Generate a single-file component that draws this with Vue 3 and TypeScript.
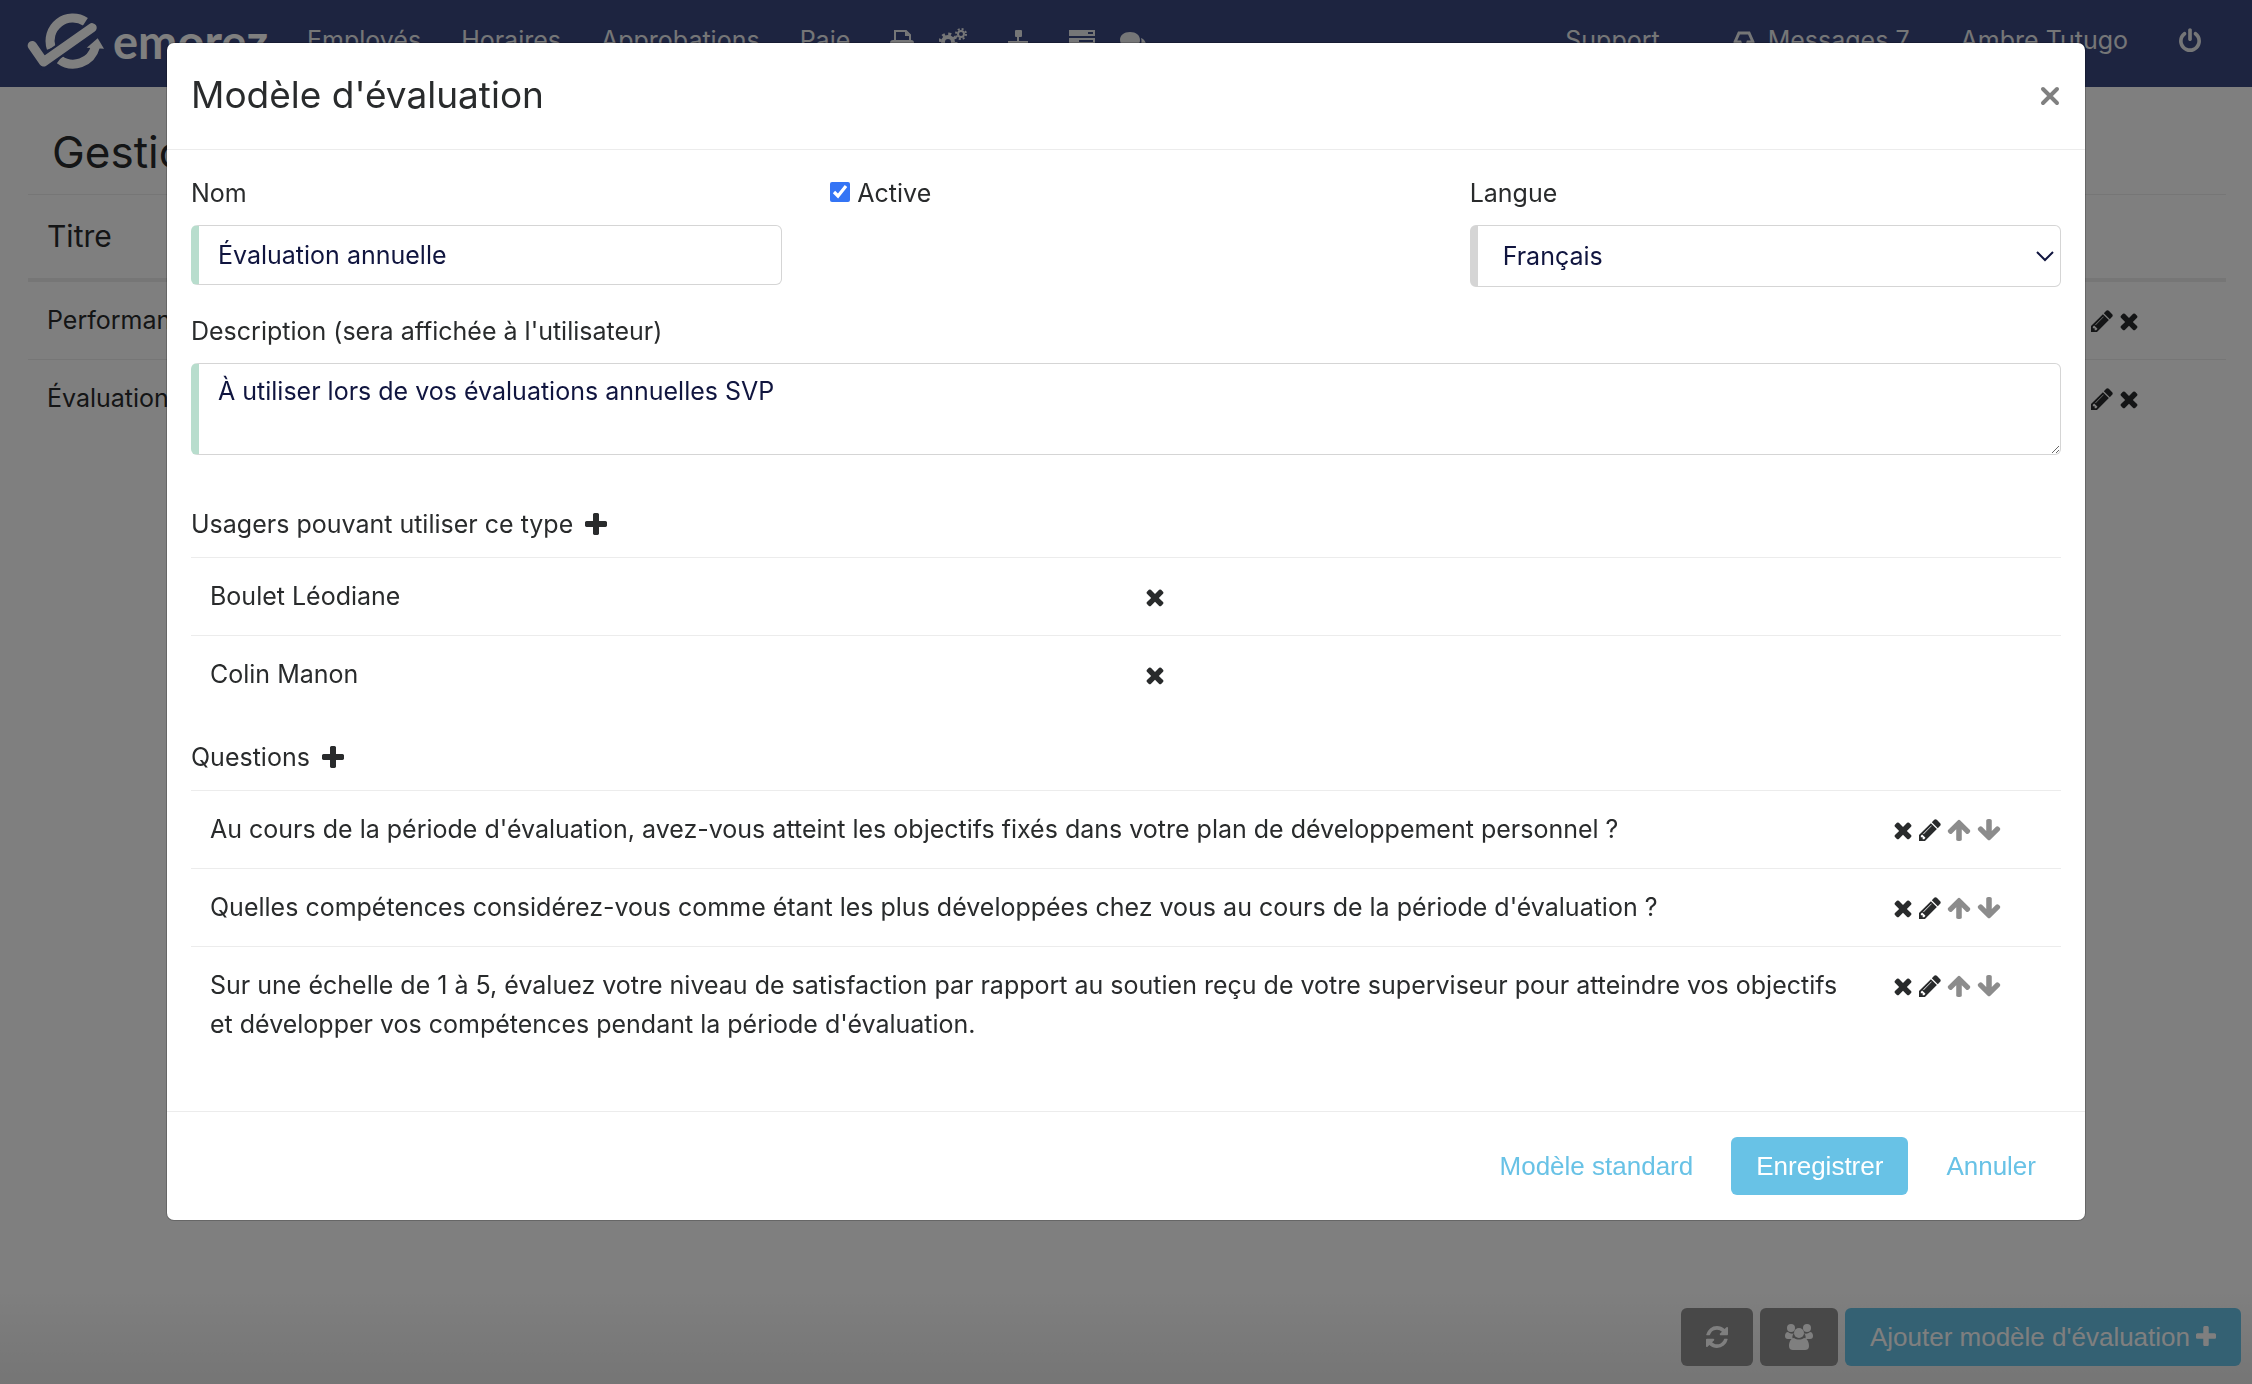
<script setup lang="ts">
import { ref } from 'vue'

interface Icon {
  box: string
  width: number
  path: string
}

const icons: Record<string, Icon> = {
  times: {
    box: '192 0 1408 1792',
    width: 20,
    path: 'M1490 1322q0 40-28 68l-136 136q-28 28-68 28t-68-28l-294-294-294 294q-28 28-68 28t-68-28l-136-136q-28-28-28-68t28-68l294-294-294-294q-28-28-28-68t28-68l136-136q28-28 68-28t68 28l294 294 294-294q28-28 68-28t68 28l136 136q28 28 28 68t-28 68l-294 294 294 294q28 28 28 68z',
  },
  plus: {
    box: '192 0 1408 1792',
    width: 20,
    path: 'M1600 736v192q0 40-28 68t-68 28h-416v416q0 40-28 68t-68 28h-192q-40 0-68-28t-28-68v-416h-416q-40 0-68-28t-28-68v-192q0-40 28-68t68-28h416v-416q0-40 28-68t68-28h192q40 0 68 28t28 68v416h416q40 0 68 28t28 68z',
  },
  pencil: {
    box: '128 0 1536 1792',
    width: 22,
    path: 'M491 1536l91-91-235-235-91 91v107h128v128h107zm523-928q0-22-22-22-10 0-17 7l-542 542q-7 7-7 17 0 22 22 22 10 0 17-7l542-542q7-7 7-17zm-54-192l416 416-832 832h-416v-416zm683 96q0 53-37 90l-166 166-416-416 166-165q36-38 90-38 53 0 91 38l235 234q37 39 37 91z',
  },
  up: {
    box: '64 0 1664 1792',
    width: 24,
    path: 'M1675 971q0 51-37 90l-75 75q-38 38-91 38-54 0-90-38l-294-293v704q0 52-37.5 84.5t-90.5 32.5h-128q-53 0-90.5-32.5t-37.5-84.5v-704l-294 293q-36 38-90 38t-90-38l-75-75q-38-38-38-90 0-53 38-91l651-651q35-37 90-37 54 0 91 37l651 651q37 39 37 91z',
  },
  down: {
    box: '64 0 1664 1792',
    width: 24,
    path: 'M1675 832q0 53-37 90l-651 652q-39 37-91 37-53 0-90-37l-651-652q-38-36-38-90 0-53 38-91l74-75q39-37 91-37 53 0 90 37l294 294v-704q0-52 38-90t90-38h128q52 0 90 38t38 90v704l294-294q37-37 90-37 52 0 91 37l75 75q37 39 37 91z',
  },
  power: {
    box: '128 0 1536 1792',
    width: 22,
    path: 'M1664 896q0 156-61 298t-164 245-245 164-298 61-298-61-245-164-164-245-61-298q0-182 80.5-343t226.5-270q43-32 95.5-25t83.5 50q32 42 24.5 94.5t-49.5 84.5q-98 74-151.5 181t-53.5 228q0 104 40.5 198.5t109.5 163.5 163.5 109.5 198.5 40.5 198.5-40.5 163.5-109.5 109.5-163.5 40.5-198.5q0-121-53.5-228t-151.5-181q-42-32-49.5-84.5t24.5-94.5q31-43 84-50t95 25q146 109 226.5 270t80.5 343zm-640-768v640q0 52-38 90t-90 38-90-38-38-90v-640q0-52 38-90t90-38 90 38 38 90z',
  },
  refresh: {
    box: '128 0 1536 1792',
    width: 22,
    path: 'M1639 1056q0 5-1 7-64 268-268 434.5t-478 166.5q-146 0-282.5-55t-243.5-157l-129 129q-19 19-45 19t-45-19-19-45v-448q0-26 19-45t45-19h448q26 0 45 19t19 45-19 45l-137 137q71 66 161 102t187 36q134 0 250-65t186-179q11-17 53-117 8-23 30-23h192q13 0 22.5 9.5t9.5 22.5zm25-800v448q0 26-19 45t-45 19h-448q-26 0-45-19t-19-45 19-45l138-138q-148-137-349-137-134 0-250 65t-186 179q-11 17-53 117-8 23-30 23h-199q-13 0-22.5-9.5t-9.5-22.5v-7q65-268 270-434.5t480-166.5q146 0 284 55.5t245 156.5l130-129q19-19 45-19t45 19 19 45z',
  },
}

const name = ref('Évaluation annuelle')
const active = ref(true)
const language = ref('fr')
const description = ref('À utiliser lors de vos évaluations annuelles SVP')

const templates = ['Performance', 'Évaluation annuelle']
const users = ['Boulet Léodiane', 'Colin Manon']
const questions = [
  "Au cours de la période d'évaluation, avez-vous atteint les objectifs fixés dans votre plan de développement personnel ?",
  "Quelles compétences considérez-vous comme étant les plus développées chez vous au cours de la période d'évaluation ?",
  "Sur une échelle de 1 à 5, évaluez votre niveau de satisfaction par rapport au soutien reçu de votre superviseur pour atteindre vos objectifs et développer vos compétences pendant la période d'évaluation.",
]
const templateActions = [
  { icon: 'pencil', label: 'Modifier' },
  { icon: 'times', label: 'Supprimer' },
]
const questionActions = [
  { icon: 'times', label: 'Supprimer' },
  { icon: 'pencil', label: 'Modifier' },
  { icon: 'up', label: 'Monter' },
  { icon: 'down', label: 'Descendre' },
]
</script>

<template>
  <div class="page">
    <header class="topbar">
      <a href="#" class="brand">
        <svg class="mark" viewBox="20 30 235 180" width="78" height="60" fill="none" aria-hidden="true">
          <path d="M93 142A69 69 0 0 1 196 62" stroke="#fff" stroke-width="27" />
          <path d="M118 176A69 69 0 0 0 226 138" stroke="#fff" stroke-width="27" />
          <path d="M200 140L233 112L252 143Z" fill="#fff" />
          <path d="M36 134L70 183L216 80" stroke="#3a4880" stroke-width="42" />
          <path d="M36 134L70 183L216 80" stroke="#fff" stroke-width="28" stroke-linecap="round" stroke-linejoin="round" />
        </svg>
        <span>emorez</span>
      </a>
      <nav class="menu">
        <a href="#">Employés</a>
        <a href="#">Horaires</a>
        <a href="#">Approbations</a>
        <a href="#">Paie</a>
        <span class="pair">
          <a href="#" aria-label="Imprimer">
            <svg width="24" height="26" viewBox="0 0 24 26" aria-hidden="true">
              <path d="M5 13V3h11l4 4v6" fill="none" stroke="currentColor" stroke-width="2" />
              <path d="M15 3v5h5z" fill="currentColor" />
              <path d="M3 12h18a3 3 0 0 1 3 3v6h-4v-4H4v4H0v-6a3 3 0 0 1 3-3z" fill="currentColor" />
              <path d="M5 18v6h14v-6" fill="none" stroke="currentColor" stroke-width="2" />
            </svg>
          </a>
          <a href="#" aria-label="Paramètres">
            <svg width="28" height="26" viewBox="0 0 28 26" fill="none" stroke="currentColor" aria-hidden="true">
              <circle cx="9" cy="14" r="5" stroke-width="4" />
              <circle cx="9" cy="14" r="8" stroke-width="3" stroke-dasharray="3 3.28" />
              <circle cx="22" cy="6" r="3" stroke-width="2" />
              <circle cx="22" cy="6" r="5" stroke-width="2" stroke-dasharray="2 1.93" />
              <circle cx="22" cy="21" r="3" stroke-width="2" />
              <circle cx="22" cy="21" r="5" stroke-width="2" stroke-dasharray="2 1.93" />
            </svg>
          </a>
        </span>
        <a href="#" aria-label="Organigramme">
          <svg width="22" height="26" viewBox="0 0 22 26" fill="currentColor" aria-hidden="true">
            <rect x="8" y="2" width="7" height="7" rx="1" />
            <path d="M10 9h2v4h9v5h-2v-3h-7v3h-2v-3H3v3H1v-5h9z" />
            <rect x="0" y="18" width="6" height="6" /><rect x="8" y="18" width="6" height="6" /><rect x="16" y="18" width="6" height="6" />
          </svg>
        </a>
        <span class="pair">
          <a href="#" aria-label="Serveur">
            <svg width="26" height="26" viewBox="0 0 26 26" aria-hidden="true">
              <path d="M0 2h26v6H0zM0 10h26v6H0zM0 18h26v6H0z" fill="currentColor" />
              <path d="M19 4h5v2h-5zM10 12h14v2H10zM15 20h9v2h-9z" fill="#3a4880" />
            </svg>
          </a>
          <a href="#" aria-label="Commentaires">
            <svg width="26" height="26" viewBox="0 0 26 26" fill="currentColor" aria-hidden="true">
              <path d="M10 4c6 0 10 3 10 8s-4 8-10 8l-6 3 1-4c-3-1-5-4-5-7 0-5 4-8 10-8z" />
              <path d="M21 10c3 1 5 4 5 7 0 2-1 4-3 5l1 3-5-3h-5c5-1 9-6 7-12z" />
            </svg>
          </a>
        </span>
      </nav>
      <nav class="account">
        <a href="#" class="support">Support</a>
        <a href="#" class="messages">
          <svg width="22" height="26" viewBox="0 0 22 26" fill="none" stroke="currentColor" stroke-width="3" aria-hidden="true">
            <path d="M2 14L6 5h10l4 9v7H2zM2 14h5l1 3h6l1-3h5" />
          </svg>
          Messages 7
        </a>
        <a href="#">Ambre Tutugo</a>
        <a href="#" aria-label="Déconnexion">
          <svg :width="icons.power.width" height="26" :viewBox="icons.power.box"><path :d="icons.power.path" fill="currentColor" /></svg>
        </a>
      </nav>
    </header>

    <main class="content">
      <h1>Gestion des modèles d'évaluation</h1>
      <table class="list templates">
        <thead>
          <tr>
            <th scope="col">Titre</th>
            <th scope="col" class="tools"></th>
          </tr>
        </thead>
        <tbody>
          <tr v-for="template in templates" :key="template">
            <td>{{ template }}</td>
            <td class="tools">
              <div class="actions">
                <button v-for="action in templateActions" :key="action.icon" type="button" class="icon" :aria-label="action.label">
                  <svg :width="icons[action.icon].width" height="26" :viewBox="icons[action.icon].box"><path :d="icons[action.icon].path" fill="currentColor" /></svg>
                </button>
              </div>
            </td>
          </tr>
        </tbody>
      </table>
    </main>

    <footer class="toolbar">
      <button type="button" class="btn grey" aria-label="Rafraîchir">
        <svg :width="icons.refresh.width" height="26" :viewBox="icons.refresh.box"><path :d="icons.refresh.path" fill="currentColor" /></svg>
      </button>
      <button type="button" class="btn grey" aria-label="Usagers">
        <svg width="28" height="26" viewBox="0 0 28 26" fill="currentColor" aria-hidden="true">
          <circle cx="6" cy="4" r="4" /><circle cx="22" cy="4" r="4" />
          <path d="M3 8c2 2 5 2 6 1-2 2-2 5-1 6H3c-2 0-3-1-3-3s1-4 3-4zM25 8c-2 2-5 2-6 1 2 2 2 5 1 6h5c2 0 3-1 3-3s-1-4-3-4z" />
          <circle cx="14" cy="9" r="5" />
          <path d="M9 14c3 2 7 2 10 0 3 0 5 4 5 8 0 3-2 4-4 4H8c-2 0-4-1-4-4 0-4 2-8 5-8z" />
        </svg>
      </button>
      <button type="button" class="btn primary add">
        Ajouter modèle d'évaluation
        <svg :width="icons.plus.width" height="26" :viewBox="icons.plus.box"><path :d="icons.plus.path" fill="currentColor" /></svg>
      </button>
    </footer>

    <div class="backdrop">
      <section class="modal" role="dialog" aria-modal="true" aria-labelledby="modal-title">
        <header class="modal-head">
          <h2 id="modal-title">Modèle d'évaluation</h2>
          <button type="button" class="close" aria-label="Fermer">
            <svg width="22" height="22" viewBox="0 0 22 22" aria-hidden="true">
              <path d="M4 4L18 18M18 4L4 18" stroke="currentColor" stroke-width="4" stroke-linecap="round" />
            </svg>
          </button>
        </header>

        <div class="modal-body">
          <div class="fields">
            <div class="field">
              <label for="name">Nom</label>
              <input id="name" v-model="name" type="text" class="control valid" />
            </div>
            <label class="check"><input v-model="active" type="checkbox" />Active</label>
            <div class="field">
              <label for="language">Langue</label>
              <div class="picker">
                <select id="language" v-model="language" class="control">
                  <option value="fr">Français</option>
                  <option value="en">Anglais</option>
                </select>
                <svg class="chevron" width="20" height="14" viewBox="0 0 20 14" fill="none" aria-hidden="true">
                  <path d="M2 3L10 11L18 3" stroke="#10153f" stroke-width="2" />
                </svg>
              </div>
            </div>
          </div>

          <div class="field description">
            <label for="description">Description (sera affichée à l'utilisateur)</label>
            <textarea id="description" v-model="description" class="control valid"></textarea>
          </div>

          <div class="group">
            <h3>Usagers pouvant utiliser ce type
              <button type="button" class="icon" aria-label="Ajouter un usager">
                <svg width="22" height="28" :viewBox="icons.plus.box"><path :d="icons.plus.path" fill="currentColor" /></svg>
              </button>
            </h3>
            <table class="list users">
              <tbody>
                <tr v-for="user in users" :key="user">
                  <td>{{ user }}</td>
                  <td class="tools">
                    <div class="actions">
                      <button type="button" class="icon" aria-label="Retirer">
                        <svg :width="icons.times.width" height="26" :viewBox="icons.times.box"><path :d="icons.times.path" fill="currentColor" /></svg>
                      </button>
                    </div>
                  </td>
                </tr>
              </tbody>
            </table>
          </div>

          <div class="group">
            <h3>Questions
              <button type="button" class="icon" aria-label="Ajouter une question">
                <svg width="22" height="28" :viewBox="icons.plus.box"><path :d="icons.plus.path" fill="currentColor" /></svg>
              </button>
            </h3>
            <table class="list questions">
              <tbody>
                <tr v-for="question in questions" :key="question">
                  <td>{{ question }}</td>
                  <td class="tools">
                    <div class="actions">
                      <button v-for="action in questionActions" :key="action.icon" type="button" class="icon" :class="action.icon" :aria-label="action.label">
                        <svg :width="icons[action.icon].width" height="26" :viewBox="icons[action.icon].box"><path :d="icons[action.icon].path" fill="currentColor" /></svg>
                      </button>
                    </div>
                  </td>
                </tr>
              </tbody>
            </table>
          </div>
        </div>

        <footer class="modal-foot">
          <button type="button" class="btn link">Modèle standard</button>
          <button type="button" class="btn primary">Enregistrer</button>
          <button type="button" class="btn link">Annuler</button>
        </footer>
      </section>
    </div>
  </div>
</template>

<style>
body {
  margin: 0;
}
</style>

<style scoped>
* {
  box-sizing: border-box;
}
.page {
  min-height: 100vh;
  display: flex;
  flex-direction: column;
  background: #fff;
  color: #292b2c;
  font: 400 25px/39px Inter, 'Liberation Sans', sans-serif;
}
a {
  color: inherit;
  text-decoration: none;
}
svg {
  display: block;
}
.topbar {
  height: 87px;
  padding: 0 51px 6px 27px;
  display: flex;
  align-items: center;
  background: #3a4880;
  color: #ebecef;
}
.brand {
  display: flex;
  align-items: center;
  gap: 8px;
  margin-right: 39px;
  color: #fff;
  font: 700 47px/60px Lato, sans-serif;
}
.menu,
.account,
.pair {
  display: flex;
  align-items: center;
}
.menu {
  gap: 40px;
}
.pair {
  gap: 25px;
}
.account {
  gap: 51px;
  margin-left: auto;
}
.support {
  margin-right: 22px;
}
.messages {
  display: flex;
  align-items: center;
  gap: 13px;
}
.content {
  flex: 1;
  padding: 35px 26px 0 28px;
}
h1,
h2,
h3 {
  margin: 0;
  font-weight: 400;
}
h1 {
  padding: 0 24px 12px;
  font-size: 44px;
  line-height: 60px;
}
.list {
  width: 100%;
  border-collapse: separate;
  border-spacing: 0;
  table-layout: fixed;
}
.list td,
.list th {
  padding: 19px;
  border-top: 1px solid #ececec;
  text-align: left;
  vertical-align: top;
}
.list th {
  padding: 22px 19px;
  border-bottom: 3px solid #ececec;
  font-size: 30px;
  font-weight: 400;
}
.list tbody tr:first-child td {
  border-top-color: #ececec;
}
.templates .tools {
  width: 7%;
}
.users .tools {
  width: 50%;
}
.questions .tools {
  width: 10%;
}
.actions {
  height: 39px;
  display: flex;
  align-items: center;
  gap: 6px;
}
.icon,
.close {
  padding: 0;
  border: 0;
  background: none;
  color: inherit;
  cursor: pointer;
}
.up,
.down {
  color: #8c8c8c;
}
.toolbar {
  display: flex;
  justify-content: flex-end;
  gap: 7px;
  padding: 20px 11px 18px;
  background: linear-gradient(#fff, #ebebeb);
}
.btn {
  height: 58px;
  padding: 0 25px;
  border: 0;
  border-radius: 6px;
  background: none;
  font: 400 26px/39px 'Liberation Sans', Arial, sans-serif;
  cursor: pointer;
}
.grey {
  background: #909090;
  color: #fff;
}
.primary {
  background: #68c2e6;
  color: #fff;
}
.link {
  color: #68c2e6;
}
.add {
  display: flex;
  align-items: center;
  gap: 6px;
}
.backdrop {
  position: fixed;
  inset: 0;
  overflow: auto;
  padding: 43px 167px;
  background: rgba(0, 0, 0, 0.5);
}
.modal {
  border-radius: 7px;
  background: #fff;
  box-shadow: 0 0 0 1px rgba(0, 0, 0, 0.2);
}
.modal-head {
  padding: 24px;
  display: flex;
  align-items: center;
  justify-content: space-between;
  border-bottom: 1px solid #ececec;
}
h2 {
  padding-bottom: 2px;
  font-size: 37px;
  line-height: 56px;
}
.close {
  color: #808080;
}
.modal-body {
  padding: 24px 24px 48px;
}
.fields {
  display: grid;
  grid-template-columns: repeat(3, minmax(0, 1fr));
  gap: 48px;
  align-items: start;
}
.field {
  display: flex;
  flex-direction: column;
  gap: 12px;
}
.check {
  display: flex;
  align-items: center;
  gap: 7px;
}
.check input {
  width: 20px;
  height: 20px;
  margin: 0 0 3px;
  accent-color: #3474f5;
}
.control {
  display: block;
  width: 100%;
  height: 60px;
  margin: 0;
  padding: 8px 19px;
  border: 1px solid #d5d5d5;
  border-left-width: 8px;
  border-radius: 6px;
  background: #fff;
  color: #10153f;
  font: inherit;
}
.valid {
  border-left-color: #b8ddcd;
}
.picker {
  position: relative;
}
select.control {
  height: 62px;
  padding: 0 25px;
  appearance: none;
}
.chevron {
  position: absolute;
  right: 6px;
  top: 24px;
  pointer-events: none;
}
textarea.control {
  height: 92px;
  resize: vertical;
}
.description {
  margin: 25px 0 50px;
}
.group + .group {
  margin-top: 25px;
}
h3 {
  margin-bottom: 13px;
  display: flex;
  align-items: center;
  gap: 12px;
  font-size: 25px;
  line-height: 39px;
}
.modal-foot {
  padding: 25px 24px;
  display: flex;
  justify-content: flex-end;
  gap: 13px;
  border-top: 1px solid #ececec;
}
</style>
